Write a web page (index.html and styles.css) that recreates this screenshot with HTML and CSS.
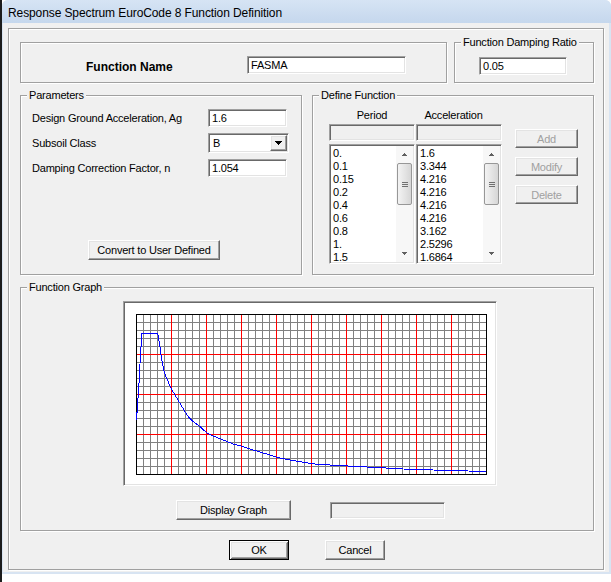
FILE: index.html
```html
<!DOCTYPE html>
<html>
<head>
<meta charset="utf-8">
<title>Response Spectrum EuroCode 8 Function Definition</title>
<link rel="stylesheet" href="styles.css">
</head>
<body>
<div class="desktop">
  <div class="window">
    <div class="titlebar">Response Spectrum EuroCode 8 Function Definition</div>
    <div class="client">
      <div class="frame etched">
        <div class="row row-top">
          <div class="fname-box etched">
            <span class="fname-label">Function Name</span>
            <div class="edit sunken fname-edit">FASMA</div>
          </div>
          <div class="group damping etched">
            <span class="legend">Function Damping Ratio</span>
            <div class="edit sunken damp-edit">0.05</div>
          </div>
        </div>

        <div class="row row-mid">
          <div class="group params etched">
            <span class="legend">Parameters</span>
            <div class="param-grid">
              <span class="plabel">Design Ground Acceleration, Ag</span>
              <div class="edit sunken pedit">1.6</div>
              <span class="plabel">Subsoil Class</span>
              <div class="combo sunken">
                <span class="combo-text">B</span>
                <span class="combo-btn btn">
                  <svg width="7" height="4" viewBox="0 0 7 4"><path d="M0 0h7v1h-7z M1 1h5v1h-5z M2 2h3v1h-3z M3 3h1v1h-1z" fill="#000"/></svg>
                </span>
              </div>
              <span class="plabel">Damping Correction Factor, n</span>
              <div class="edit sunken pedit">1.054</div>
            </div>
            <div class="btn convert-btn">Convert to User Defined</div>
          </div>

          <div class="group define etched">
            <span class="legend">Define Function</span>
            <div class="define-body">
              <div class="columns">
                <div class="col">
                  <div class="col-head">Period</div>
                  <div class="sunken head-edit"></div>
                  <div class="listbox sunken">
                    <div class="items">
                      <div>0.</div><div>0.1</div><div>0.15</div><div>0.2</div><div>0.4</div><div>0.6</div><div>0.8</div><div>1.</div><div>1.5</div>
                    </div>
                    <div class="vscroll">
                      <div class="sb-arrow"><svg width="5" height="3" viewBox="0 0 5 3"><path d="M2 0h1v1h-1z M1 1h3v1h-3z M0 2h5v1h-5z" fill="#606060"/></svg></div>
                      <div class="sb-thumb"><svg width="6" height="5" viewBox="0 0 6 5"><path d="M0 0h6v1h-6z M0 2h6v1h-6z M0 4h6v1h-6z" fill="#707070"/></svg></div>
                      <div class="sb-track"></div>
                      <div class="sb-arrow"><svg width="5" height="3" viewBox="0 0 5 3"><path d="M0 0h5v1h-5z M1 1h3v1h-3z M2 2h1v1h-1z" fill="#606060"/></svg></div>
                    </div>
                  </div>
                </div>
                <div class="col">
                  <div class="col-head accel-head">Acceleration</div>
                  <div class="sunken head-edit"></div>
                  <div class="listbox sunken">
                    <div class="items">
                      <div>1.6</div><div>3.344</div><div>4.216</div><div>4.216</div><div>4.216</div><div>4.216</div><div>3.162</div><div>2.5296</div><div>1.6864</div>
                    </div>
                    <div class="vscroll">
                      <div class="sb-arrow"><svg width="5" height="3" viewBox="0 0 5 3"><path d="M2 0h1v1h-1z M1 1h3v1h-3z M0 2h5v1h-5z" fill="#606060"/></svg></div>
                      <div class="sb-thumb"><svg width="6" height="5" viewBox="0 0 6 5"><path d="M0 0h6v1h-6z M0 2h6v1h-6z M0 4h6v1h-6z" fill="#707070"/></svg></div>
                      <div class="sb-track"></div>
                      <div class="sb-arrow"><svg width="5" height="3" viewBox="0 0 5 3"><path d="M0 0h5v1h-5z M1 1h3v1h-3z M2 2h1v1h-1z" fill="#606060"/></svg></div>
                    </div>
                  </div>
                </div>
              </div>
              <div class="side-buttons">
                <div class="btn disabled">Add</div>
                <div class="btn disabled">Modify</div>
                <div class="btn disabled">Delete</div>
              </div>
            </div>
          </div>
        </div>

        <div class="group graph etched">
          <span class="legend">Function Graph</span>
          <div class="graph-frame sunken">
            <svg class="plot" width="351" height="161" viewBox="0 0 351 161">
              <defs>
                <pattern id="minor" width="7" height="8" patternUnits="userSpaceOnUse">
                  <path d="M0.5 0V8M0 0.5H7" stroke="#808080" stroke-width="1" fill="none"/>
                </pattern>
                <pattern id="major" width="35" height="40" patternUnits="userSpaceOnUse">
                  <path d="M0.5 0V40M0 0.5H35" stroke="#ff0000" stroke-width="1" fill="none"/>
                </pattern>
              </defs>
              <rect x="0" y="0" width="351" height="161" fill="#fff"/>
              <rect x="0" y="0" width="351" height="161" fill="url(#minor)"/>
              <rect x="0" y="0" width="351" height="161" fill="url(#major)"/>
              <rect x="0.5" y="0.5" width="350" height="160" fill="none" stroke="#000" stroke-width="1"/>
              <polyline shape-rendering="crispEdges" fill="none" stroke="#0000ff" stroke-width="1"
                points="0.5,106 0.5,99 1.5,98 2,84 3,69 4.5,40 6,19.5 21.3,19.5 22.3,22 23.7,31 25,41 26.7,51 28.3,58 30,63 31.7,66.3 33.3,71 35,74.3 39,81 44,89.3 49,97.7 52.3,102.7 57.3,107.7 64,112.7 70.7,118.7 77.3,122 87.3,126 97.3,130 107.3,132.7 117.3,136 130.7,140 140.7,143.3 154,146 167.3,148.3 180.7,150.3 194,151 217.3,152.3 244,153.7 267.3,155 297.3,156 332.3,157 350,158"/>
            </svg>
          </div>
          <div class="graph-controls">
            <div class="btn display-btn">Display Graph</div>
            <div class="sunken status-box"></div>
          </div>
        </div>

        <div class="dialog-buttons">
          <div class="btn default dlg-btn">OK</div>
          <div class="btn dlg-btn">Cancel</div>
        </div>
      </div>
    </div>
  </div>
</div>
</body>
</html>
```

FILE: styles.css
```css
* { box-sizing: border-box; }

html, body {
  margin: 0;
  padding: 0;
}

body {
  width: 611px;
  height: 582px;
  overflow: hidden;
  background: #ffffff;
  font-family: "Liberation Sans", Arial, sans-serif;
  font-size: 11px;
  letter-spacing: -0.2px;
  color: #000;
}

.desktop {
  height: 582px;
  border-left: 2px solid #1c1c1c;
}

.window {
  width: 609px;
  height: 574px;
  background: #d8e4f2;
  border-radius: 6px 6px 0 0;
  display: flex;
  flex-direction: column;
}

.titlebar {
  height: 23px;
  padding: 3px 0 0 6px;
  line-height: 20px;
  font-size: 12px;
  letter-spacing: -0.1px;
  color: #000;
  background: linear-gradient(to bottom, #d6e4f4, #c5d7ed);
  border-radius: 6px 6px 0 0;
  flex: none;
}

.client {
  flex: 1;
  margin: 0 2px 2px 1px;
  background: #f0f0f0;
  padding: 5px 5px 2px 5px;
  display: flex;
}

/* edges */
.etched {
  border: 1px solid #a0a0a0;
  box-shadow: inset 1px 1px #ffffff, 1px 1px #ffffff;
}

.sunken {
  border: 1px solid;
  border-color: #a0a0a0 #ffffff #ffffff #a0a0a0;
  box-shadow: inset 1px 1px #696969, inset -1px -1px #e3e3e3;
}

.btn {
  border: 1px solid;
  border-color: #ffffff #696969 #696969 #ffffff;
  box-shadow: inset -1px -1px #a0a0a0, inset 1px 1px #e3e3e3;
  background: #f0f0f0;
  display: flex;
  align-items: center;
  justify-content: center;
  white-space: nowrap;
}

.btn.default {
  border: 1px solid #000;
  box-shadow: inset 1px 1px #ffffff, inset -1px -1px #696969, inset 2px 2px #e3e3e3, inset -2px -2px #a0a0a0;
}

.btn.disabled {
  color: #a0a0a0;
}

.frame {
  flex: 1;
  display: flex;
  flex-direction: column;
  padding: 13px 9px 0 11px;
}

.row {
  display: flex;
  flex: none;
}

.row-top {
  height: 41px;
  gap: 7px;
}

.row-mid {
  margin-top: 12px;
  height: 180px;
  gap: 10px;
}

.group {
  position: relative;
}

.legend {
  position: absolute;
  top: -7px;
  left: 6px;
  padding: 0 2px;
  line-height: 13px;
  background: #f0f0f0;
  white-space: nowrap;
}

.edit {
  background: #ffffff;
  padding: 0 0 0 3px;
  line-height: 16px;
  white-space: nowrap;
}

/* function name */
.fname-box {
  width: 427px;
  display: flex;
  align-items: flex-start;
  padding: 13px 0 0 65px;
}

.fname-label {
  width: 161px;
  flex: none;
  margin-top: 3px;
  font-size: 12px;
  font-weight: bold;
  letter-spacing: 0;
  line-height: 16px;
}

.fname-edit {
  width: 159px;
  height: 18px;
}

.damping {
  width: 140px;
  padding: 14px 0 0 24px;
}

.damp-edit {
  width: 88px;
  height: 18px;
}

/* parameters */
.params {
  width: 282px;
  padding: 13px 0 0 11px;
  display: flex;
  flex-direction: column;
  align-items: flex-start;
}

.param-grid {
  display: grid;
  grid-template-columns: 176px 81px;
  row-gap: 6px;
  align-items: center;
}

.plabel {
  line-height: 13px;
  white-space: nowrap;
}

.pedit {
  width: 79px;
  height: 18px;
}

.combo {
  width: 81px;
  height: 20px;
  background: #ffffff;
  padding: 1px;
  display: flex;
}

.combo-text {
  flex: 1;
  padding-left: 3px;
  line-height: 16px;
}

.combo-btn {
  width: 17px;
  height: 16px;
  flex: none;
}

.convert-btn {
  margin: 63px 0 0 56px;
  width: 132px;
  height: 20px;
}

/* define function */
.define {
  width: 282px;
  padding: 13px 0 0 16px;
}

.define-body {
  display: flex;
  align-items: flex-start;
}

.columns {
  display: flex;
  gap: 1px;
}

.col {
  width: 86px;
  display: flex;
  flex-direction: column;
}

.col-head {
  height: 13px;
  line-height: 13px;
  text-align: center;
  white-space: nowrap;
}

.accel-head {
  padding-right: 11px;
}

.head-edit {
  margin-top: 2px;
  height: 17px;
  background: #f0f0f0;
}

.listbox {
  margin-top: 3px;
  height: 120px;
  background: #ffffff;
  padding: 1px;
  display: flex;
}

.items {
  flex: 1;
  padding: 1px 0 0 2px;
  line-height: 13px;
  overflow: hidden;
}

.vscroll {
  width: 17px;
  flex: none;
  display: flex;
  flex-direction: column;
  background: #f7f7f7;
}

.sb-arrow {
  height: 17px;
  flex: none;
  display: flex;
  align-items: center;
  justify-content: center;
}

.sb-thumb {
  height: 42px;
  flex: none;
  margin: 0 1px;
  border: 1px solid #979797;
  border-radius: 2px;
  background: linear-gradient(to right, #f3f3f3, #e2e2e2 60%, #d6d6d6);
  display: flex;
  align-items: center;
  justify-content: center;
}

.sb-track {
  flex: 1;
}

.side-buttons {
  margin: 20px 0 0 13px;
  display: flex;
  flex-direction: column;
  gap: 9px;
}

.side-buttons .btn {
  width: 63px;
  height: 19px;
}

/* graph */
.graph {
  margin-top: 12px;
  height: 244px;
  flex: none;
  padding: 13px 0 0 102px;
}

.graph-frame {
  width: 374px;
  height: 185px;
  background: #ffffff;
  padding: 12px 0 0 12px;
}

.plot {
  display: block;
}

.graph-controls {
  margin: 14px 0 0 53px;
  display: flex;
  align-items: flex-start;
}

.display-btn {
  width: 115px;
  height: 20px;
}

.status-box {
  margin: 2px 0 0 39px;
  width: 115px;
  height: 17px;
  background: #f0f0f0;
}

.dialog-buttons {
  margin-top: 9px;
  display: flex;
  justify-content: center;
  gap: 36px;
}

.dlg-btn {
  width: 60px;
  height: 20px;
}
```
